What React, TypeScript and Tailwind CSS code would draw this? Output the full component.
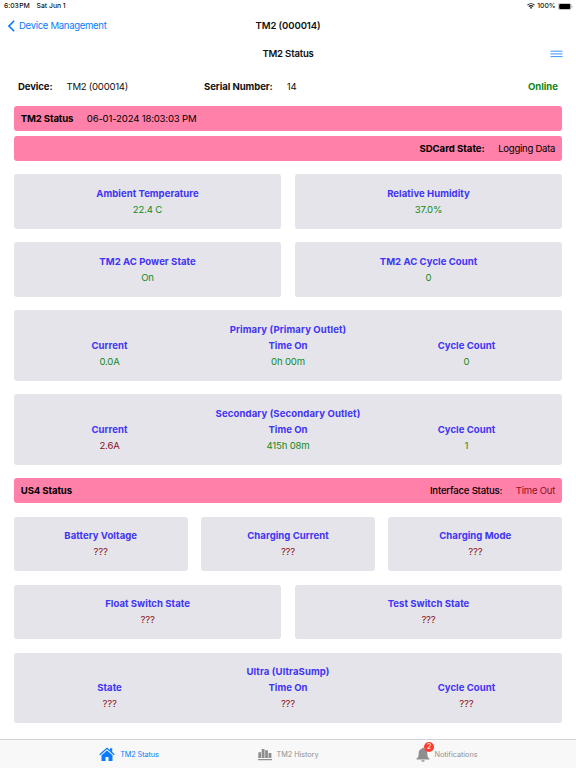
import { ReactNode } from 'react'
import clsx from 'clsx'

type Tone = 'ok' | 'bad'

interface Reading {
  label: string
  value: string
  tone: Tone
}

const toneClass = {
  ok: 'text-[#148a1c]',
  bad: 'text-[#8b1220]',
}

function ReadingCell({ label, value, tone }: Reading) {
  return (
    <div className="flex-1 text-center">
      <div className="font-bold tracking-[0.04px] text-[#4234f5]">{label}</div>
      <div className={clsx('tracking-[-0.15px]', toneClass[tone])}>{value}</div>
    </div>
  )
}

function CardRow({ readings }: { readings: Reading[] }) {
  return (
    <div className="flex gap-[13.5px]">
      {readings.map((r) => (
        <div key={r.label} className="flex flex-1 rounded-[3px] bg-[#e5e4ea] pt-[11.8px] pb-[10.6px]">
          <ReadingCell {...r} />
        </div>
      ))}
    </div>
  )
}

function OutletCard({ title, readings }: { title: string; readings: Reading[] }) {
  return (
    <div className="rounded-[3px] bg-[#e5e4ea] px-[6.5px] pt-[11.8px] pb-[10.6px]">
      <div className="text-center font-bold tracking-[0.11px] text-[#4234f5]">{title}</div>
      <div className="flex">
        {readings.map((r) => (
          <ReadingCell key={r.label} {...r} />
        ))}
      </div>
    </div>
  )
}

function PinkBar({ children, className }: { children: ReactNode; className?: string }) {
  return (
    <div className={clsx('flex h-[24.8px] items-center rounded-[3px] bg-[#ff80a8] px-[7px] text-black', className)}>
      {children}
    </div>
  )
}

function WifiIcon() {
  return (
    <svg viewBox="0 0 16 12" className="h-[6px] w-[8px]" fill="none" stroke="#111" strokeWidth="2.2">
      <path d="M1 4.4C5 .6 11 .6 15 4.4M3.6 7.2c2.6-2.4 6.2-2.4 8.8 0" />
      <path d="M5.6 9.2c1.4-1.2 3.4-1.2 4.8 0L8 11.8z" fill="#111" stroke="none" />
    </svg>
  )
}

function BatteryIcon() {
  return (
    <svg viewBox="0 0 15 7" className="h-[7px] w-[15px]">
      <rect x=".4" y=".4" width="12.7" height="6.2" rx="1.7" fill="none" stroke="#999" strokeWidth=".6" />
      <rect x="1.2" y="1.1" width="11.1" height="4.8" rx="1" fill="#000" />
      <path d="M13.8 2.4v2.2q.7-.3.7-1.1t-.7-1.1z" fill="#999" />
    </svg>
  )
}

function HomeIcon() {
  return (
    <svg viewBox="0 0 16 15" className="h-[15px] w-[16px]">
      <path d="M.7 7.7 8 1.3l7.3 6.4" fill="none" stroke="#0a7aff" strokeWidth="1.3" />
      <path d="M11 1.3h2.2v4L11 3.4z" fill="#0a7aff" />
      <path d="M2.5 8.3 8 3.5l5.5 4.8v5.8H9.5V10h-3v4.1h-4z" fill="#0a7aff" />
    </svg>
  )
}

function HistoryIcon() {
  return (
    <svg viewBox="0 0 14 13" className="h-[13px] w-[14px]" fill="#8e8e8e">
      <path d="M.3 4.2h2.8V10H.3zM3.7 1h2.8v9H3.7zM7.1 2.2h2.8V10H7.1zM10.5 5h2.9v5h-2.9zM0 11.1h14v1.2H0z" />
    </svg>
  )
}

function BellIcon() {
  return (
    <svg viewBox="0 0 14 15" className="h-[15px] w-[14px]" fill="#8e8e8e">
      <path d="M7 .7c.7 0 1.1.5 1.1 1.1 2.1.5 3.2 2.1 3.2 4.3 0 3.3.5 4.6 2.2 5.6v.9H.5v-.9c1.7-1 2.2-2.3 2.2-5.6 0-2.2 1.1-3.8 3.2-4.3C5.9 1.2 6.3.7 7 .7z" />
      <path d="M5.3 13.2h3.4a1.7 1.5 0 0 1-3.4 0z" />
    </svg>
  )
}

export default function App() {
  return (
    <div className="flex h-[768px] w-[576px] flex-col overflow-hidden bg-white font-['Inter',sans-serif] text-[9.56px] leading-[16px] text-[#111]">
      <div className="flex h-3 items-center justify-between pl-1 pr-[3px] text-[6.8px] font-medium leading-3">
        <div className="flex gap-[7px]">
          <span className="tracking-[-0.08px]">6:03&#8202;PM</span>
          <span>Sat Jun 1</span>
        </div>
        <div className="flex items-center gap-[2.5px]">
          <WifiIcon />
          <span className="tracking-[-0.05px]">100%</span>
          <BatteryIcon />
        </div>
      </div>

      <header className="grid h-7 grid-cols-3 items-center pl-[7.5px]">
        <button className="flex items-center gap-[4.5px] text-[#0a7aff]">
          <svg viewBox="0 0 7 12" className="h-[12px] w-[7px]" fill="none" stroke="#0a7aff" strokeWidth="1.6">
            <path d="M6.2.8 1 6l5.2 5.2" />
          </svg>
          <span className="tracking-[-0.31px]">Device Management</span>
        </button>
        <h1 className="-ml-[7.5px] text-center font-semibold tracking-[-0.09px]">TM2 (000014)</h1>
      </header>

      <div className="grid h-7 grid-cols-3 items-center px-[13px]">
        <h2 className="col-start-2 text-center font-semibold tracking-[-0.18px]">TM2 Status</h2>
        <button className="justify-self-end">
          <svg viewBox="0 0 13 8" className="h-[8px] w-[13px]" stroke="#3c95ff" strokeWidth="1">
            <path d="M.5 1.2h12M.5 3.9h12M.5 6.6h12" />
          </svg>
        </button>
      </div>

      <div className="flex h-[38.3px] items-center px-[18px]">
        <div className="flex w-[186px] gap-[14px]">
          <span className="font-bold tracking-[-0.1px]">Device:</span>
          <span className="tracking-[-0.24px]">TM2 (000014)</span>
        </div>
        <div className="flex gap-[14px]">
          <span className="font-bold tracking-[-0.06px]">Serial Number:</span>
          <span className="tracking-[-0.1px]">14</span>
        </div>
        <span className="ml-auto font-bold text-[#0d8515]">Online</span>
      </div>

      <main className="flex flex-1 flex-col gap-[13.6px] px-[13.8px]">
        <div className="flex flex-col gap-[4.8px]">
          <PinkBar className="gap-[13.5px]">
            <span className="font-bold tracking-[-0.12px]">TM2 Status</span>
            <span className="tracking-[-0.16px]">06-01-2024 18:03:03 PM</span>
          </PinkBar>
          <PinkBar className="justify-end gap-[13.5px] pt-[0.8px]">
            <span className="font-bold">SDCard State:</span>
            <span className="tracking-[-0.26px]">Logging Data</span>
          </PinkBar>
        </div>

        <CardRow
          readings={[
            { label: 'Ambient Temperature', value: '22.4 C', tone: 'ok' },
            { label: 'Relative Humidity', value: '37.0%', tone: 'ok' },
          ]}
        />
        <CardRow
          readings={[
            { label: 'TM2 AC Power State', value: 'On', tone: 'ok' },
            { label: 'TM2 AC Cycle Count', value: '0', tone: 'ok' },
          ]}
        />
        <OutletCard
          title="Primary (Primary Outlet)"
          readings={[
            { label: 'Current', value: '0.0A', tone: 'ok' },
            { label: 'Time On', value: '0h 00m', tone: 'ok' },
            { label: 'Cycle Count', value: '0', tone: 'ok' },
          ]}
        />
        <OutletCard
          title="Secondary (Secondary Outlet)"
          readings={[
            { label: 'Current', value: '2.6A', tone: 'bad' },
            { label: 'Time On', value: '415h 08m', tone: 'ok' },
            { label: 'Cycle Count', value: '1', tone: 'ok' },
          ]}
        />

        <PinkBar className="justify-between">
          <span className="font-bold tracking-[-0.1px]">US4 Status</span>
          <div className="flex gap-[13.5px]">
            <span className="font-medium tracking-[-0.18px]">Interface Status:</span>
            <span className="tracking-[-0.22px] text-[#8b1220]">Time Out</span>
          </div>
        </PinkBar>

        <CardRow
          readings={[
            { label: 'Battery Voltage', value: '???', tone: 'bad' },
            { label: 'Charging Current', value: '???', tone: 'bad' },
            { label: 'Charging Mode', value: '???', tone: 'bad' },
          ]}
        />
        <CardRow
          readings={[
            { label: 'Float Switch State', value: '???', tone: 'bad' },
            { label: 'Test Switch State', value: '???', tone: 'bad' },
          ]}
        />
        <OutletCard
          title="Ultra (UltraSump)"
          readings={[
            { label: 'State', value: '???', tone: 'bad' },
            { label: 'Time On', value: '???', tone: 'bad' },
            { label: 'Cycle Count', value: '???', tone: 'bad' },
          ]}
        />
      </main>

      <nav className="flex h-[29px] shrink-0 items-center justify-center border-t border-[#d4d4d4] bg-[#f8f8f8] pt-px text-[7.3px] text-[#929292]">
        <button className="flex w-[159px] items-center justify-center gap-[5px] text-[#0a7aff]">
          <HomeIcon />
          <span className="tracking-[-0.1px]">TM2 Status</span>
        </button>
        <button className="flex w-[159px] items-center justify-center gap-[5px]">
          <HistoryIcon />
          <span className="tracking-[-0.06px]">TM2 History</span>
        </button>
        <button className="flex w-[159px] items-center justify-center gap-[4px]">
          <span className="relative">
            <BellIcon />
            <span className="absolute -top-[5px] left-[7.5px] flex h-[10px] w-[10px] items-center justify-center rounded-full bg-[#ff3b30] text-[7.5px] leading-none text-white">
              2
            </span>
          </span>
          <span className="tracking-[-0.04px]">Notifications</span>
        </button>
      </nav>
    </div>
  )
}
